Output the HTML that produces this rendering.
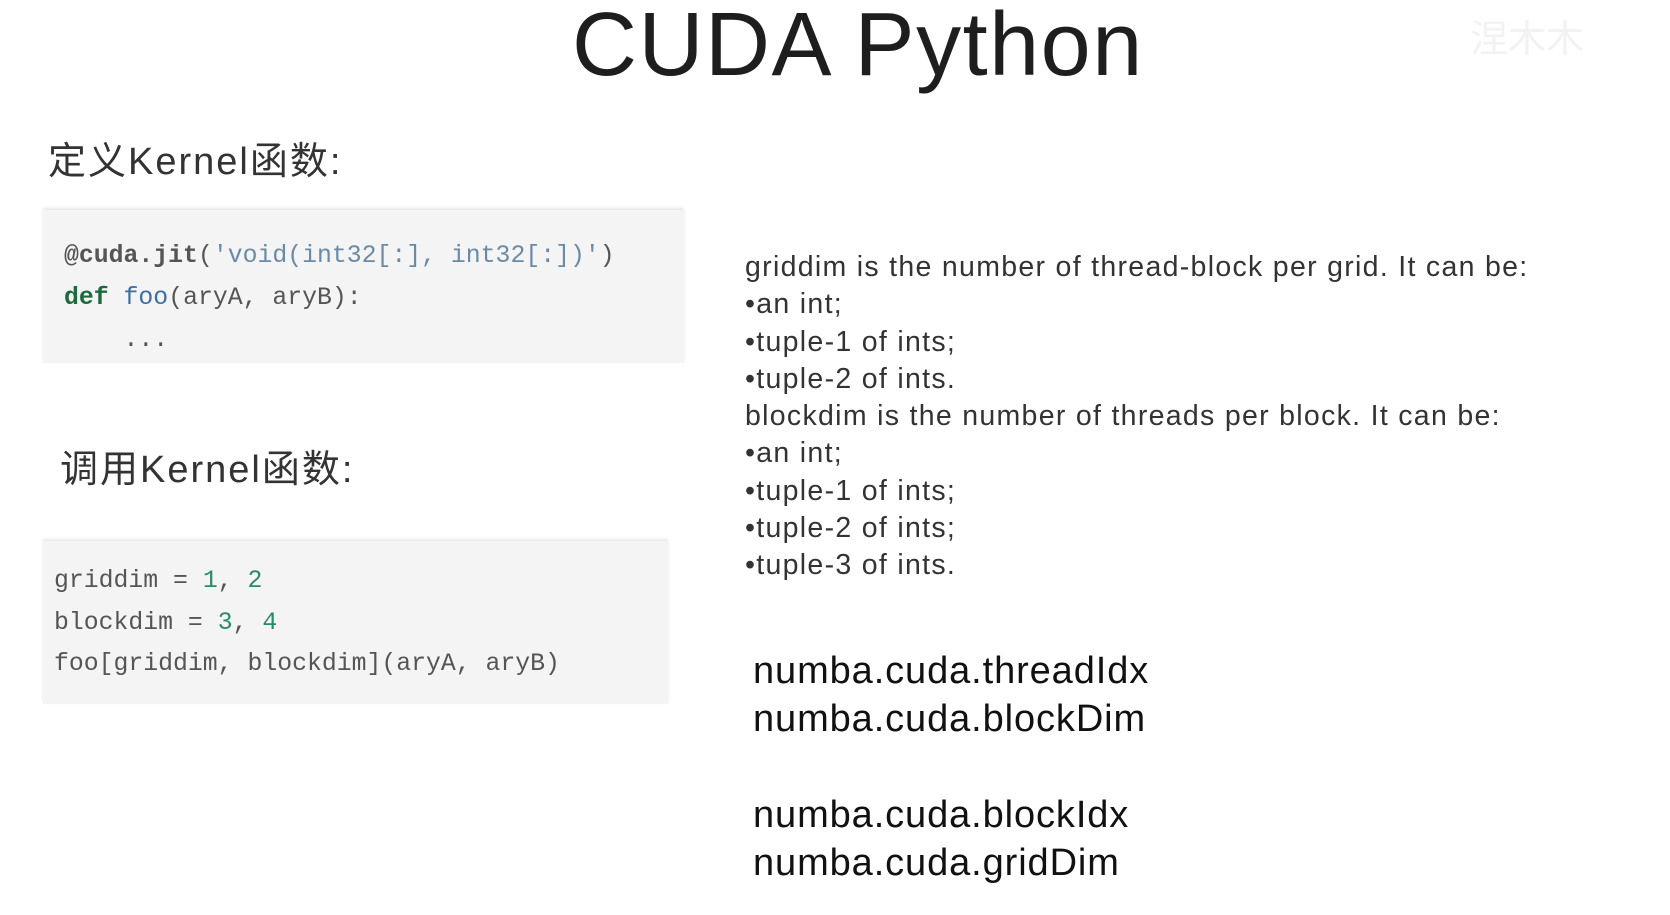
<!DOCTYPE html>
<html><head><meta charset="utf-8"><style>
body{margin:0;width:1670px;height:915px;background:#fff;position:relative;overflow:hidden;font-family:"Liberation Sans","Noto Sans CJK SC",sans-serif;color:#222}
.a{position:absolute;white-space:pre}
.title{left:572px;top:-6px;font-size:90px;color:#1e1e1e;letter-spacing:1.5px}
.h{font-size:38px;color:#333;letter-spacing:2px}
.box{position:absolute;background:#f4f4f4;box-shadow:0 -2px 3px #e6e6e6}
.code{font-family:"Liberation Mono",monospace;font-size:24.8px;color:#555}
.b{font-weight:bold}
.s{color:#6a8aa5}.g{color:#1d6a3c;font-weight:bold}.f{color:#3a6ea5}.n{color:#2a8a6a}
.r{font-size:28.5px;color:#333;left:745px;letter-spacing:1.3px}
.m{font-size:38px;color:#111;left:753px;letter-spacing:0.9px}
</style></head><body>
<div class="a title">CUDA Python</div>
<div class="a" style="left:1470px;top:8px;font-size:38px;color:#f2f2f2">涅木木</div>
<div class="a h" style="left:48px;top:130px">定义Kernel函数:</div>
<div class="box" style="left:43px;top:210px;width:641px;height:153px"></div>
<div class="a code" style="left:64px;top:242px"><span class="b">@cuda.jit</span>(<span class="s">'void(int32[:], int32[:])'</span>)</div>
<div class="a code" style="left:64px;top:284px"><span class="g">def</span> <span class="f">foo</span>(aryA, aryB):</div>
<div class="a code" style="left:64px;top:326px">    ...</div>
<div class="a h" style="left:60px;top:438px">调用Kernel函数:</div>
<div class="box" style="left:43px;top:541px;width:625px;height:163px"></div>
<div class="a code" style="left:54px;top:567px">griddim = <span class="n">1</span>, <span class="n">2</span></div>
<div class="a code" style="left:54px;top:609px">blockdim = <span class="n">3</span>, <span class="n">4</span></div>
<div class="a code" style="left:54px;top:650px">foo[griddim, blockdim](aryA, aryB)</div>
<div class="a r" style="top:249px;line-height:37.3px">griddim is the number of thread-block per grid. It can be:
•an int;
•tuple-1 of ints;
•tuple-2 of ints.
blockdim is the number of threads per block. It can be:
•an int;
•tuple-1 of ints;
•tuple-2 of ints;
•tuple-3 of ints.</div>
<div class="a m" style="top:647px;line-height:48px">numba.cuda.threadIdx
numba.cuda.blockDim</div>
<div class="a m" style="top:791px;line-height:48px">numba.cuda.blockIdx
numba.cuda.gridDim</div>
</body></html>
